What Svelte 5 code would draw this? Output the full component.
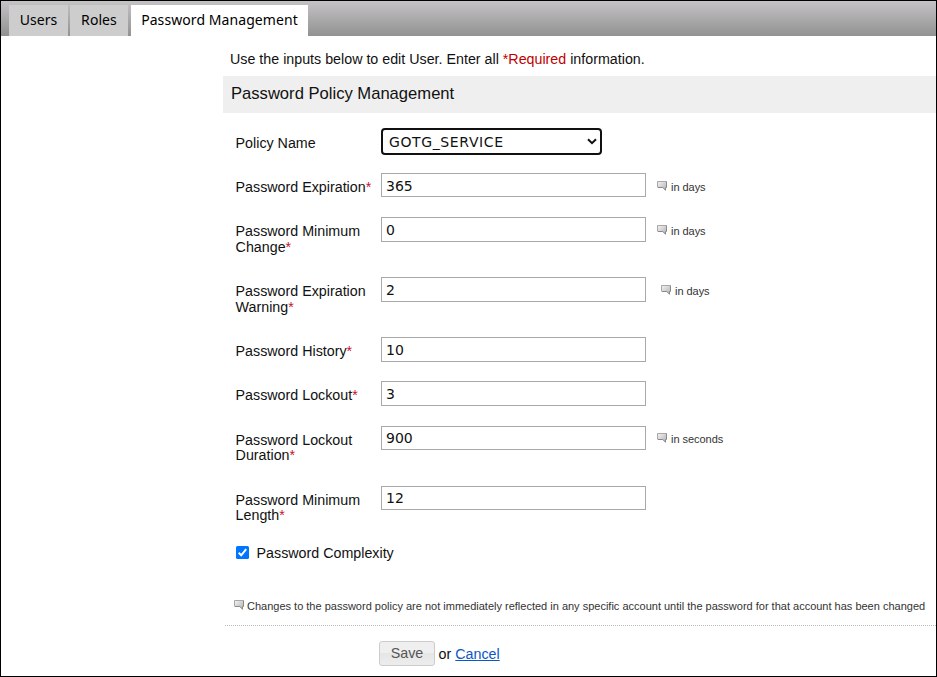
<script>
  const tabs = ['Users', 'Roles', 'Password Management'];
  let active = $state(2);
  let policy = $state('GOTG_SERVICE');
  let complex = $state(true);
  let fields = $state([
    { lines: ['Password Expiration'], value: '365', hint: 'in days', row: 44, box: 24, low: true },
    { lines: ['Password Minimum', 'Change'], value: '0', hint: 'in days', row: 60, box: 25 },
    { lines: ['Password Expiration', 'Warning'], value: '2', hint: 'in days', row: 60, box: 25, indent: 4 },
    { lines: ['Password History'], value: '10', row: 44, box: 25 },
    { lines: ['Password Lockout'], value: '3', row: 45, box: 25 },
    { lines: ['Password Lockout', 'Duration'], value: '900', hint: 'in seconds', row: 60, box: 24, tight: true },
    { lines: ['Password Minimum', 'Length'], value: '12', row: 60, box: 24, tight: true }
  ]);
</script>

{#snippet bubble()}
  <svg class="bubble" width="11" height="10" viewBox="0 0 11 10" aria-hidden="true">
    <defs>
      <linearGradient id="shade" x1="0" y1="0" x2="1" y2="1">
        <stop offset="0" stop-color="#f4f4f4" />
        <stop offset="1" stop-color="#b0b0b0" />
      </linearGradient>
    </defs>
    <path d="M.5 .5H9.5V6.5H8.5V9.5L5.5 6.5H.5Z" fill="url(#shade)" />
    <path d="M.5 6.5V.5H9.5" fill="none" stroke="#a8a8a8" />
    <path d="M9.5 .5V6.5H8.5V9.2L5.8 6.5H1" fill="none" stroke="#888" />
  </svg>
{/snippet}

<div class="page">
  <nav>
    {#each tabs as tab, i}
      <button type="button" class="tab" class:active={active === i} onclick={() => (active = i)}>{tab}</button>
    {/each}
  </nav>
  <main>
    <p class="intro">Use the inputs below to edit User. Enter all <span class="req">*Required</span> information.</p>
    <h2>Password Policy Management</h2>
    <form onsubmit={(e) => e.preventDefault()}>
      <div class="row first">
        <label for="policy">Policy Name</label>
        <div class="select">
          <select id="policy" bind:value={policy}><option>GOTG_SERVICE</option></select>
          <svg width="10" height="7" viewBox="0 0 10 7" aria-hidden="true"><path d="M1 1.2L5 5.2L9 1.2" fill="none" stroke="#111" stroke-width="2" /></svg>
        </div>
      </div>
      {#each fields as f, i}
        <div class="row" class:tight={f.tight} style:height="{f.row}px">
          <label for="f{i}">{#each f.lines as line, n}{#if n}<br />{/if}{line}{/each}<span class="star">*</span></label>
          <input id="f{i}" class="box" class:low={f.low} type="text" bind:value={f.value} style:height="{f.box}px" />
          {#if f.hint}
            <span class="hint" style:margin-left="{11 + (f.indent ?? 0)}px">{@render bubble()}{f.hint}</span>
          {/if}
        </div>
      {/each}
      <label class="complex">
        <input type="checkbox" bind:checked={complex} />
        <svg width="13" height="13" viewBox="0 0 13 13" aria-hidden="true">
          <rect width="13" height="13" rx="1.5" fill="#0075ff" />
          {#if complex}<path d="M2.7 6.8L5.2 9.3L10.2 3.2" fill="none" stroke="#fff" stroke-width="2" />{/if}
        </svg>
        <span>Password Complexity</span>
      </label>
      <p class="note">{@render bubble()}<span>Changes to the password policy are not immediately reflected in any specific account until the password for that account has been changed</span></p>
      <div class="actions">
        <button type="submit">Save</button>
        <span class="or">or</span>
        <a href="#cancel">Cancel</a>
      </div>
    </form>
  </main>
</div>

<style>
  :global(body) { margin: 0; background: #fff; }
  .page {
    box-sizing: border-box;
    width: 937px;
    height: 677px;
    border: 1px solid #000;
    overflow: hidden;
    background: #fff;
    color: #111;
    font: 14.28px/16px "Liberation Sans", Arial, sans-serif;
  }
  nav {
    box-sizing: border-box;
    display: flex;
    height: 35px;
    padding: 4px 0 0 8px;
    background: linear-gradient(#c5c3c5, #929292);
  }
  .tab {
    box-sizing: border-box;
    width: 59px;
    height: 31px;
    margin: 0 2px 0 0;
    padding: 0 0 2px;
    border: 0;
    background: #cdcdcd;
    color: #000;
    font: 14px/20px "Noto Sans", "Open Sans", sans-serif;
    letter-spacing: .08px;
    white-space: nowrap;
  }
  .tab:nth-child(2) { width: 58px; margin-right: 3px; }
  .tab.active { width: 177px; background: #fff; }
  main { margin-left: 222px; }
  .intro { margin: 0; padding: 15px 0 0 7px; height: 25px; white-space: nowrap; }
  .req { color: #c00000; }
  .star { color: #c8102e; }
  h2 {
    box-sizing: border-box;
    height: 37px;
    margin: 0;
    padding-left: 8px;
    background: #efefef;
    font-size: 16.6px;
    font-weight: 400;
    line-height: 35px;
  }
  form { padding-top: 15px; }
  .row { display: flex; align-items: flex-start; padding-left: 12.6px; }
  .row label { flex: none; width: 145.4px; padding-top: 6px; white-space: nowrap; }
  .row.first { height: 45px; }
  .row.first label { padding-top: 7px; }
  .row.tight label { padding-top: 6.5px; line-height: 15px; }
  .row.tight .hint { padding-top: 7px; }
  .box, select {
    box-sizing: border-box;
    width: 265px;
    margin: 0;
    padding: 0 4px;
    border: 1px solid #a9a9a9;
    background: #fff;
    color: #111;
    font: 14px "DejaVu Sans", Verdana, sans-serif;
    outline: 0;
  }
  .box.low { padding-top: 2px; }
  .select { display: grid; width: 221px; height: 27px; }
  select {
    grid-area: 1 / 1;
    width: 221px;
    height: 27px;
    padding: 0 6px;
    border: 2px solid #101010;
    border-radius: 4px;
    appearance: none;
    letter-spacing: .62px;
  }
  .select svg { grid-area: 1 / 1; align-self: center; justify-self: end; margin-right: 5px; pointer-events: none; }
  .hint, .note { display: flex; color: #333; font-size: 11px; line-height: 13px; white-space: nowrap; }
  .hint { padding-top: 8px; letter-spacing: -.04px; }
  .bubble { flex: none; margin-right: 3px; }
  .complex { display: flex; align-items: center; height: 16px; margin-top: -1px; padding-left: 13px; }
  .complex input { position: absolute; opacity: 0; }
  .complex svg { margin-bottom: 2px; }
  .complex span { margin-left: 7.6px; }
  .note {
    box-sizing: border-box;
    height: 65px;
    margin: 0 0 0 2px;
    padding: 39px 0 0 9px;
    border-bottom: 1px dotted #bbb;
  }
  .bubble + span { margin-left: -1px; }
  .actions { display: flex; padding: 15px 0 0 156px; }
  .actions button {
    box-sizing: border-box;
    width: 56px;
    height: 25px;
    padding: 0 0 2px;
    border: 1px solid #ccc;
    border-radius: 3px;
    background: linear-gradient(#efefef 50%, #e6e6e6 50%, #ededed);
    color: #555;
    font: 14.3px "Liberation Sans", Arial, sans-serif;
  }
  .or { margin: 5px 4px 0 3.6px; }
  a { margin-top: 5px; color: #0b57c4; }
</style>
